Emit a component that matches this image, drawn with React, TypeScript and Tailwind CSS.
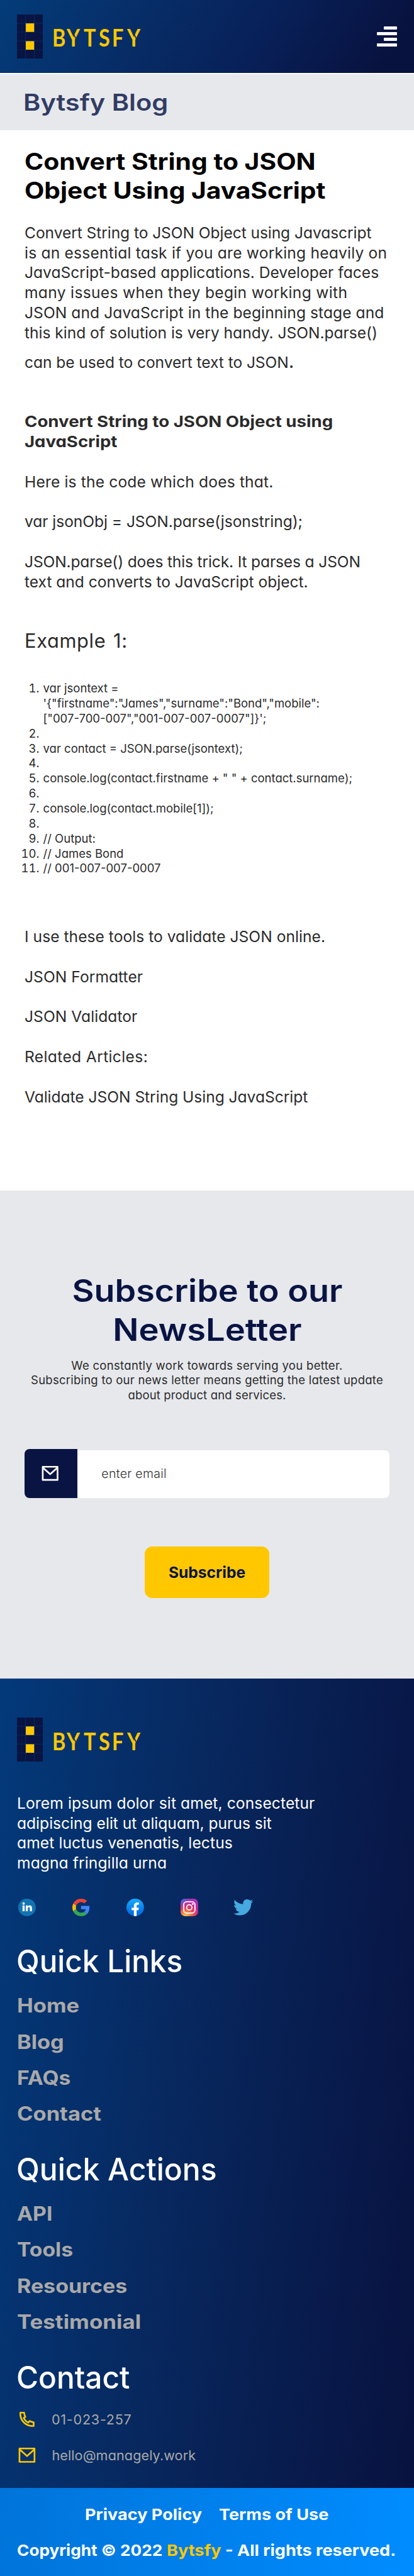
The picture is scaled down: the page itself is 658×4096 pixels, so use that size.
import type { ReactNode } from 'react';
import { RiMailLine, RiPhoneLine } from 'react-icons/ri';
import { FaTwitter } from 'react-icons/fa';

const cells = [0, 1, 2, 3, 4].flatMap((row) => [0, 1, 2].map((col) => ({ row, col })));

function LogoMark() {
  return (
    <svg viewBox="0 0 78 132.6" className="h-[70.3px] w-[41.3px] shrink-0">
      <rect width="78" height="132.6" rx="3" fill="#06326d" />
      {cells.map(({ row, col }) => {
        if (row === 2 && col > 0) return null;
        const lit = col === 1 && (row === 1 || row === 3);
        return (
          <rect
            key={`${row}-${col}`}
            x={col * 26.5}
            y={row * 26.7}
            width="25"
            height="25.6"
            rx={lit ? 0 : 1}
            fill={lit ? '#ffc700' : '#091442'}
          />
        );
      })}
      <rect x="26.5" y="53.4" width="51.5" height="25.6" rx="2.5" fill="#091442" />
    </svg>
  );
}

function Letter({ className = '', children }: { className?: string; children: ReactNode }) {
  return (
    <span className={className}>
      <span className="relative block origin-left scale-x-[0.87]">{children}</span>
    </span>
  );
}

function SplitY() {
  return (
    <>
      Y
      <svg viewBox="0 0 24 27" className="absolute top-[5px] left-0 h-[27px] w-[24px]">
        <path d="M10.5 4 L16.5 15" stroke="#06306a" strokeWidth="1.8" fill="none" />
      </svg>
    </>
  );
}

function Logo() {
  return (
    <div className="flex items-center">
      <LogoMark />
      <div className="ml-[14.9px] flex h-[37px] pt-[2px] font-['Lato',sans-serif] text-[37.3px] leading-[37px] font-bold text-[#ffc700]">
        <Letter className="w-[22.8px]">B</Letter>
        <Letter className="w-[27.3px]"><SplitY /></Letter>
        <Letter className="w-[23.7px]">T</Letter>
        <Letter className="w-[21px]">S</Letter>
        <Letter className="w-[24.3px]">F</Letter>
        <Letter className="w-[22px]"><SplitY /></Letter>
      </div>
    </div>
  );
}

function Line({ className = '', children }: { className?: string; children: ReactNode }) {
  return (
    <span className={`block origin-left text-left whitespace-pre ${className}`}>{children}</span>
  );
}

const body = "text-[24.6px] leading-[31.8px] [font-feature-settings:'cv11']";

const code: string[][] = [
  [
    'var jsontext =',
    `'{"firstname":"James","surname":"Bond","mobile":`,
    `["007-700-007","001-007-007-0007"]}';`,
  ],
  [' '],
  ['var contact = JSON.parse(jsontext);'],
  [' '],
  ['console.log(contact.firstname + " " + contact.surname);'],
  [' '],
  ['console.log(contact.mobile[1]);'],
  [' '],
  ['// Output:'],
  ['// James Bond'],
  ['// 001-007-007-0007'],
];

function LinkedIn() {
  return (
    <svg viewBox="0 0 52.4 52.4" className="size-[27.8px]">
      <circle cx="26.2" cy="26.2" r="26.2" fill="#1275b1" />
      <circle cx="16" cy="14.4" r="3.5" fill="#fff" />
      <path
        fill="#fff"
        d="M12.8 20.5h6.3v17h-6.3zM22.5 20.5h6v2.6c1-1.7 3-2.8 5.6-2.8 4.8 0 6.9 3 6.9 7.8v9.4h-6.2v-8.3c0-2.3-.7-3.9-2.8-3.9-2.3 0-3.3 1.6-3.3 3.9v8.3h-6.2z"
      />
    </svg>
  );
}

function Google() {
  return (
    <svg viewBox="0 0 48 48" className="size-[27.8px]">
      <path fill="#ea4335" d="M24 9.5c3.54 0 6.71 1.22 9.21 3.6l6.85-6.85C35.9 2.38 30.47 0 24 0 14.62 0 6.51 5.38 2.56 13.22l7.98 6.19C12.43 13.72 17.74 9.5 24 9.5z" />
      <path fill="#4285f4" d="M46.98 24.55c0-1.57-.15-3.09-.38-4.55H24v9.02h12.94c-.58 2.96-2.26 5.48-4.78 7.18l7.73 6c4.51-4.18 7.09-10.36 7.09-17.65z" />
      <path fill="#fbbc05" d="M10.53 28.59c-.48-1.45-.76-2.99-.76-4.59s.27-3.14.76-4.59l-7.98-6.19C.92 16.46 0 20.12 0 24c0 3.88.92 7.54 2.56 10.78l7.97-6.19z" />
      <path fill="#34a853" d="M24 48c6.48 0 11.93-2.13 15.89-5.81l-7.73-6c-2.15 1.45-4.92 2.3-8.16 2.3-6.26 0-11.57-4.22-13.47-9.91l-7.98 6.19C6.51 42.62 14.62 48 24 48z" />
    </svg>
  );
}

function Facebook() {
  return (
    <svg viewBox="0 0 52.4 52.4" className="size-[27.8px]">
      <defs>
        <linearGradient id="fb" x1="0" y1="0" x2="0" y2="1">
          <stop offset="0" stopColor="#18acfe" />
          <stop offset="1" stopColor="#0163e0" />
        </linearGradient>
      </defs>
      <circle cx="26.2" cy="26.2" r="26.2" fill="url(#fb)" />
      <path
        fill="#fff"
        d="M22.2 52V34.3h-7V27.2h7v-5c0-7.2 4.3-11 10.8-11 1.7 0 3.2.1 4.4.4v6.2h-3.1c-2.9 0-3.8 1.6-3.8 4v5.4h6.6l-1.2 7.1h-5.4V52c-2.8.5-5.5.5-8.3 0z"
      />
    </svg>
  );
}

function Instagram() {
  return (
    <svg viewBox="0 0 52.4 52.4" className="size-[27.8px]">
      <defs>
        <radialGradient id="igBase" cx="0.3" cy="1.05" r="1.05">
          <stop offset="0" stopColor="#f9dd8a" />
          <stop offset="0.2" stopColor="#fd9a3c" />
          <stop offset="0.5" stopColor="#e4405f" />
          <stop offset="0.8" stopColor="#c32aa3" />
          <stop offset="1" stopColor="#a634b8" />
        </radialGradient>
        <radialGradient id="igBlue" cx="0.05" cy="0" r="0.5">
          <stop offset="0" stopColor="#4168e0" />
          <stop offset="1" stopColor="#4168e0" stopOpacity="0" />
        </radialGradient>
      </defs>
      <rect width="52.4" height="52.4" rx="13" fill="url(#igBase)" />
      <rect width="52.4" height="52.4" rx="13" fill="url(#igBlue)" />
      <rect x="9.3" y="9.3" width="33.8" height="33.8" rx="9" fill="none" stroke="#fff" strokeWidth="3.4" />
      <circle cx="26.2" cy="26.2" r="7.9" fill="none" stroke="#fff" strokeWidth="3.4" />
      <circle cx="36.6" cy="15.9" r="2.6" fill="#fff" />
    </svg>
  );
}

function Footer() {
  const link = 'text-[30.6px] leading-[57.15px] font-bold text-[#a9a9a9]';
  const heading = 'ml-[-1px] text-[49.3px] leading-[64px] font-medium text-white';
  return (
    <footer>
      <div className="h-[1287.9px] bg-[linear-gradient(96deg,#03397a_0%,#072a62_38%,#081f52_65%,#08123f_100%)] pt-[62.6px] pl-[27px]">
        <Logo />
        <div className={`mt-[50.3px] text-white ${body}`}>
          <Line className="tracking-[0.1px]">Lorem ipsum dolor sit amet, consectetur</Line>
          <Line>adipiscing elit ut aliquam, purus sit</Line>
          <Line className="tracking-[0.1px]">amet luctus venenatis, lectus</Line>
          <Line className="tracking-[0.1px]">magna fringilla urna</Line>
        </div>
        <div className="mt-[40px] flex h-[28px] items-center pl-[2.2px]">
          <div className="w-[86.1px]"><LinkedIn /></div>
          <div className="w-[86.1px]"><Google /></div>
          <div className="w-[86.1px]"><Facebook /></div>
          <div className="w-[83.8px]"><Instagram /></div>
          <FaTwitter className="size-[31.4px] text-[#46aae1]" />
        </div>
        <h3 className={`mt-[39.4px] ${heading}`}>
          <Line className="scale-x-[0.967]">Quick Links</Line>
        </h3>
        <ul className={`mt-[10.1px] ${link}`}>
          <li><Line className="scale-x-[1.13]">Home</Line></li>
          <li><Line className="scale-x-[1.12]">Blog</Line></li>
          <li><Line className="scale-x-[1.1]">FAQs</Line></li>
          <li><Line className="scale-x-[1.127]">Contact</Line></li>
        </ul>
        <h3 className={`mt-[28.1px] ${heading}`}>
          <Line className="scale-x-[0.973]">Quick Actions</Line>
        </h3>
        <ul className={`mt-[10.1px] ${link}`}>
          <li><Line className="scale-x-[1.1]">API</Line></li>
          <li><Line className="scale-x-[1.1]">Tools</Line></li>
          <li><Line className="scale-x-[1.11]">Resources</Line></li>
          <li><Line className="scale-x-[1.14]">Testimonial</Line></li>
        </ul>
        <h3 className={`mt-[27.8px] ${heading}`}>
          <Line className="scale-x-[0.97]">Contact</Line>
        </h3>
        <ul className="mt-[6.8px] text-[21.6px] text-[#a9a9a9] [font-feature-settings:'cv11']">
          <li className="flex h-[57.2px] items-center">
            <RiPhoneLine className="size-[31.8px] text-[#ffc700]" />
            <Line className="ml-[23.2px] tracking-[0.74px]">01-023-257</Line>
          </li>
          <li className="flex h-[57.2px] items-center">
            <RiMailLine className="size-[31.8px] text-[#ffc700]" />
            <Line className="ml-[23.6px] tracking-[0.1px]">hello@managely.work</Line>
          </li>
        </ul>
      </div>
      <div className="h-[139.5px] bg-[linear-gradient(93deg,#0074d9,#008cff)] pt-[13.5px] text-[24.6px] leading-[57.15px] font-bold text-white">
        <div className="flex pl-[134.8px]">
          <div className="w-[213.6px]"><Line className="scale-x-[1.1]">Privacy Policy</Line></div>
          <Line className="scale-x-[1.1]">Terms of Use</Line>
        </div>
        <div className="flex pl-[26.5px]">
          <div className="w-[238.2px]"><Line className="scale-x-[1.065]">Copyright © 2022</Line></div>
          <div className="w-[93.2px] text-[#ffc700]"><Line className="scale-x-[1.1]">Bytsfy</Line></div>
          <Line className="scale-x-[1.1]">- All rights reserved.</Line>
        </div>
      </div>
    </footer>
  );
}

export default function App() {
  return (
    <div className="w-[658px] overflow-hidden bg-white font-['Inter',sans-serif] text-[#2b2b2b]">
      <header className="flex h-[116px] items-center justify-between bg-[linear-gradient(123deg,#033c79_0%,#072c66_35%,#08215a_60%,#08123f_92%)] pr-[26.9px] pl-[27px]">
        <Logo />
        <div className="flex flex-col items-end gap-[4.4px]">
          <span className="h-[4.7px] w-[21px] rounded-[1px] bg-white" />
          <span className="h-[4.7px] w-[32px] rounded-[1px] bg-white" />
          <span className="h-[4.7px] w-[21px] rounded-[1px] bg-white" />
          <span className="h-[4.7px] w-[32px] rounded-[1px] bg-white" />
        </div>
      </header>

      <div className="mt-[1.6px] flex h-[89px] items-center bg-[#e6e8ec] pl-[36.6px] text-[36.7px] font-semibold text-[#323c63]">
        <Line className="scale-x-[1.132]">Bytsfy Blog</Line>
      </div>

      <article className="h-[1686.4px] pt-[27.2px] pl-[39px]">
        <h1 className="text-[36.7px] leading-[46px] font-bold text-black">
          <Line className="scale-x-[1.112]">Convert String to JSON</Line>
          <Line className="scale-x-[1.109]">Object Using JavaScript</Line>
        </h1>
        <div className={body}>
          <p className="mt-[29px]">
            <Line className="tracking-[-0.08px]">Convert String to JSON Object using Javascript</Line>
            <Line className="tracking-[0.2px]">is an essential task if you are working heavily on</Line>
            <Line>JavaScript-based applications. Developer faces</Line>
            <Line className="tracking-[0.32px]">many issues when they begin working with</Line>
            <Line className="tracking-[0.06px]">JSON and JavaScript in the beginning stage and</Line>
            <Line className="tracking-[-0.03px]">this kind of solution is very handy. JSON.parse()</Line>
          </p>
          <p className="mt-[15.9px] h-[31.8px]">
            <Line className="tracking-[-0.08px]">can be used to convert text to JSON<span className="text-[30px] leading-[20px]">.</span></Line>
          </p>
          <h2 className="mt-[62px] font-bold">
            <Line className="scale-x-[1.123]">Convert String to JSON Object using</Line>
            <Line className="scale-x-[1.12]">JavaScript</Line>
          </h2>
          <p className="mt-[31.9px]"><Line className="tracking-[0.15px]">Here is the code which does that.</Line></p>
          <p className="mt-[31.8px]"><Line className="tracking-[-0.06px]">var jsonObj = JSON.parse(jsonstring);</Line></p>
          <p className="mt-[31.8px]">
            <Line className="tracking-[-0.16px]">JSON.parse() does this trick. It parses a JSON</Line>
            <Line className="tracking-[-0.03px]">text and converts to JavaScript object.</Line>
          </p>
        </div>
        <h3 className="mt-[57px] text-[30.8px] leading-[40px] tracking-[0.65px] [word-spacing:2.5px] [font-feature-settings:'cv11']">
          Example 1:
        </h3>
        <ol className="mt-[44.6px] text-[18.5px] leading-[23.86px] [font-feature-settings:'cv11']">
          {code.map((row, i) => (
            <li key={i} className="flex">
              <span className="-ml-[10px] w-[33.4px] shrink-0 text-right [font-feature-settings:'tnum']">{i + 1}.</span>
              <div className="ml-[6.2px]">
                {row.map((t) => (
                  <Line key={t}>{t}</Line>
                ))}
              </div>
            </li>
          ))}
        </ol>
        <div className={`mt-[81px] flex flex-col gap-[31.8px] ${body}`}>
          <Line className="tracking-[0.03px]">I use these tools to validate JSON online.</Line>
          <Line className="tracking-[0.05px]">JSON Formatter</Line>
          <Line className="tracking-[0.05px]">JSON Validator</Line>
          <Line className="tracking-[0.36px]">Related Articles:</Line>
          <Line className="tracking-[-0.04px]">Validate JSON String Using JavaScript</Line>
        </div>
      </article>

      <section className="flex h-[775.6px] flex-col items-center bg-[#e6e8ec] pt-[129px]">
        <h2 className="text-center text-[49px] leading-[62px] font-semibold whitespace-pre text-[#091442]">
          <span className="block scale-x-[1.1]">Subscribe to our</span>
          <span className="block scale-x-[1.107]">NewsLetter</span>
        </h2>
        <p className="mt-[13.6px] text-center text-[18.5px] leading-[23.86px] whitespace-pre [font-feature-settings:'cv11']">
          <span className="block tracking-[0.31px]">We constantly work towards serving you better.</span>
          <span className="block tracking-[0.24px]">Subscribing to our news letter means getting the latest update</span>
          <span className="block tracking-[0.15px]">about product and services.</span>
        </p>
        <div className="mt-[73.3px] flex h-[77.4px] w-[580px] items-end">
          <div className="flex h-full w-[84.3px] items-center rounded-l-[8px] bg-[#091442] pl-[25.4px]">
            <RiMailLine className="size-[31.4px] text-white" />
          </div>
          <div className="flex h-[75.6px] flex-1 items-center rounded-r-[8px] bg-white pl-[38px] text-[19.5px] font-light tracking-[0.3px] text-[#333]">
            enter email
          </div>
        </div>
        <button className="mt-[76.9px] h-[82.5px] w-[198.6px] rounded-[12px] bg-[#ffc700] text-[24.6px] font-bold text-[#091442]">
          Subscribe
        </button>
      </section>

      <Footer />
    </div>
  );
}
